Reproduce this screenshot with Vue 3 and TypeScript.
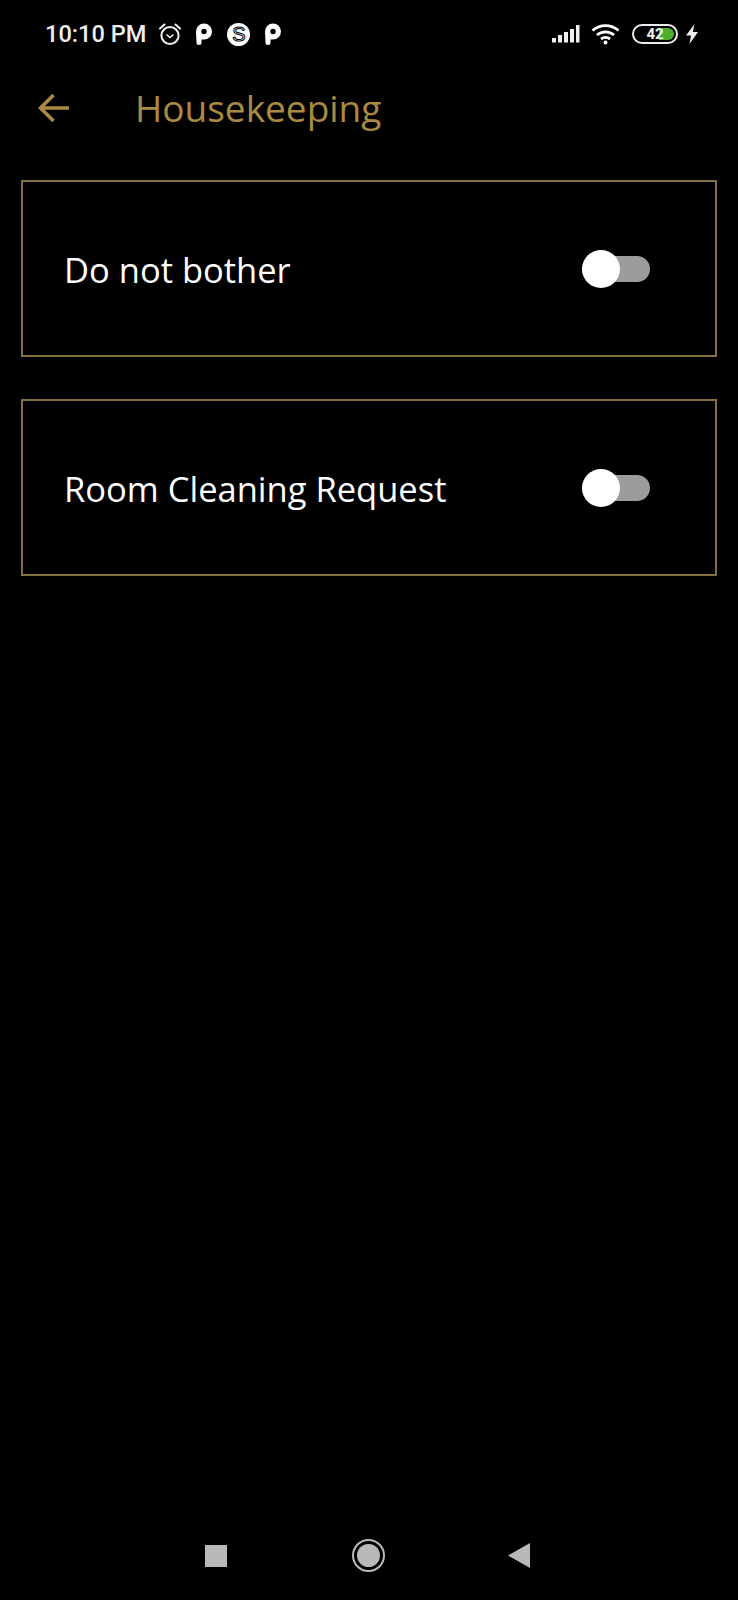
<script setup lang="ts">
const rows = ["Do not bother", "Room Cleaning Request"];
</script>

<template>
  <div class="screen">
    <header class="status">
      <div class="status__left">
        <span class="status__time">10:10 PM</span>
        <svg class="ic" width="24" height="24" viewBox="0 0 24 24" fill="none" stroke="#f2f2f2" stroke-width="2">
          <circle cx="12" cy="13.5" r="8.6" />
          <path d="M8.5 12.5l3.500 3 3.500-3" stroke-width="1.6" />
          <path d="M2 6.500 6.500 2.500M22 6.500l-4.500-4" stroke-linecap="round" />
        </svg>
        <span class="pee">
          <svg width="18" height="22" viewBox="0 0 18 22">
            <path fill="#fff" fill-rule="evenodd" d="M1 8.500a8 8 0 1 1 8 8H6.500v3a2.500 2.500 0 0 1-5 0Zm8 2.700a2.700 2.700 0 1 0 0-5.400 2.700 2.700 0 0 0 0 5.400Z" />
          </svg>
        </span>
        <span class="skype">S</span>
        <span class="pee pee--last">
          <svg width="18" height="22" viewBox="0 0 18 22">
            <path fill="#fff" fill-rule="evenodd" d="M1 8.500a8 8 0 1 1 8 8H6.500v3a2.500 2.500 0 0 1-5 0Zm8 2.700a2.700 2.700 0 1 0 0-5.400 2.700 2.700 0 0 0 0 5.400Z" />
          </svg>
        </span>
      </div>
      <div class="status__right">
        <svg width="29" height="20" viewBox="0 0 29 20" fill="#eee">
          <rect x="1" y="14" width="4" height="4.500" />
          <rect x="7" y="11" width="4" height="7.500" />
          <rect x="13" y="8" width="4" height="10.500" />
          <rect x="19" y="5" width="4" height="13.500" />
          <rect x="25" y="1" width="3.500" height="17.500" />
        </svg>
        <svg class="wifi" width="29" height="22" viewBox="0 0 29 22" fill="none" stroke="#fff" stroke-width="2.800">
          <path d="M1.500 7.500c7.500-6.500 18.500-6.500 26 0" />
          <path d="M6 12c5-4.300 12-4.300 17 0" />
          <path d="M10 16c2.800-2 6.200-2 9 0" />
          <circle cx="14.500" cy="19.500" r="2" fill="#fff" stroke="none" />
        </svg>
        <span class="battery">
          <span class="battery__fill" />
          <span class="battery__num">42</span>
        </span>
        <svg class="bolt" width="14" height="20" viewBox="0 0 14 20">
          <path fill="#eee" d="M9.500 0 1 11.500h5L4.500 20 13 8H7.800Z" />
        </svg>
      </div>
    </header>

    <div class="topbar">
      <svg class="topbar__back" width="32" height="30" viewBox="0 0 32 30" fill="none" stroke="#a98a42" stroke-width="3.600">
        <path d="M2.500 15H31M15.500 2 2.500 15l13 13" />
      </svg>
      <h1 class="topbar__title">Housekeeping</h1>
    </div>

    <section class="list">
      <div v-for="row in rows" :key="row" class="card">
        <span class="card__label">{{ row }}</span>
        <span class="toggle"><span class="toggle__thumb" /></span>
      </div>
    </section>

    <nav class="navbar">
      <span class="navbar__square" />
      <span class="navbar__home"><span /></span>
      <svg width="22" height="25" viewBox="0 0 22 25"><path fill="#b9b9b9" d="M22 0V25L0 12.500Z" /></svg>
    </nav>
  </div>
</template>

<style scoped>
.screen {
  position: relative;
  width: 738px;
  height: 1600px;
  overflow: hidden;
  color: #fff;
  background: #000;
  font-family: "Open Sans", sans-serif;
}

.status {
  display: flex;
  align-items: center;
  justify-content: space-between;
  height: 68px;
  padding: 0 39px 0 45px;
}

.status__left,
.status__right {
  display: flex;
  align-items: center;
}

.status__time {
  color: #eee;
  font-family: Roboto, sans-serif;
  font-size: 23.6px;
  font-weight: 500;
}

.ic {
  margin-left: 12px;
}

.pee {
  display: flex;
  margin-left: 13px;
}

.pee--last {
  margin-left: 14px;
}

.skype {
  display: flex;
  align-items: center;
  justify-content: center;
  width: 23px;
  height: 23px;
  margin-left: 14px;
  color: #fff;
  font-family: "Liberation Sans", sans-serif;
  font-size: 20px;
  background: #fff;
  border-radius: 50%;
  -webkit-text-stroke: 1px #000;
}

.wifi {
  margin-left: 11px;
}

.battery {
  position: relative;
  display: block;
  width: 46px;
  height: 20px;
  margin-left: 12px;
  overflow: hidden;
  border: 2px solid #eee;
  border-radius: 10px;
  box-sizing: border-box;
}

.battery__fill {
  position: absolute;
  top: 2px;
  bottom: 2px;
  left: 25px;
  width: 15px;
  background: #4caf2a;
  border-radius: 0 7px 7px 0;
}

.battery__num {
  position: absolute;
  inset: 0;
  color: #f2f2f2;
  font-family: Roboto, sans-serif;
  font-size: 15px;
  font-weight: 700;
  line-height: 16px;
  text-align: center;
}

.bolt {
  margin-left: 7px;
}

.topbar {
  display: flex;
  align-items: center;
  height: 80px;
  padding-left: 38px;
}

.topbar__back {
  flex: none;
}

.topbar__title {
  margin: 0 0 2px 65px;
  color: #a98a42;
  font-size: 37px;
  font-weight: 400;
}

.list {
  display: grid;
  gap: 42px;
  padding: 32px 21px 0;
}

.card {
  display: flex;
  align-items: center;
  justify-content: space-between;
  height: 177px;
  padding: 1px 65px 0 41px;
  border: 2px solid #85703f;
  box-sizing: border-box;
}

.card__label {
  font-size: 34.500px;
}

.toggle {
  position: relative;
  display: block;
  width: 68px;
  height: 26px;
  background: #9c9c9c;
  border-radius: 13px;
}

.toggle__thumb {
  position: absolute;
  top: -6px;
  left: 0;
  width: 38px;
  height: 38px;
  background: #fff;
  border-radius: 50%;
}

.navbar {
  position: absolute;
  right: 208px;
  bottom: 28px;
  left: 205px;
  display: flex;
  align-items: center;
  justify-content: space-between;
}

.navbar__square {
  width: 22px;
  height: 22px;
  background: #b9b9b9;
}

.navbar__home {
  display: flex;
  align-items: center;
  justify-content: center;
  width: 33px;
  height: 33px;
  margin-left: 2px;
  border: 2.500px solid #b9b9b9;
  border-radius: 50%;
  box-sizing: border-box;
}

.navbar__home span {
  width: 23px;
  height: 23px;
  background: #b9b9b9;
  border-radius: 50%;
}
</style>
